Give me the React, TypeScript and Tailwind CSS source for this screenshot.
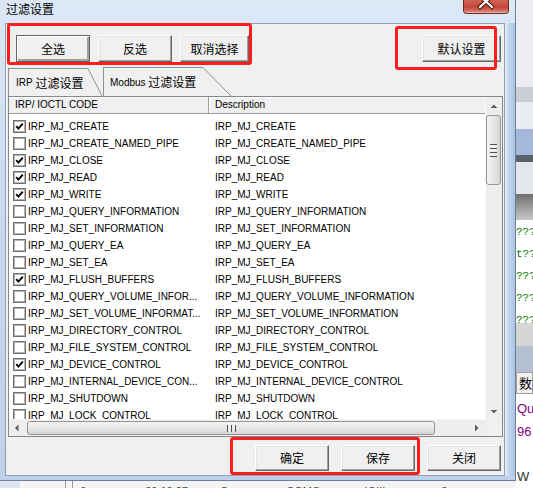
import React, { useState } from 'react';

type Row = { code: string; desc: string; on: boolean };

const ROWS: Row[] = [
  { code: 'IRP_MJ_CREATE', desc: 'IRP_MJ_CREATE', on: true },
  { code: 'IRP_MJ_CREATE_NAMED_PIPE', desc: 'IRP_MJ_CREATE_NAMED_PIPE', on: false },
  { code: 'IRP_MJ_CLOSE', desc: 'IRP_MJ_CLOSE', on: true },
  { code: 'IRP_MJ_READ', desc: 'IRP_MJ_READ', on: true },
  { code: 'IRP_MJ_WRITE', desc: 'IRP_MJ_WRITE', on: true },
  { code: 'IRP_MJ_QUERY_INFORMATION', desc: 'IRP_MJ_QUERY_INFORMATION', on: false },
  { code: 'IRP_MJ_SET_INFORMATION', desc: 'IRP_MJ_SET_INFORMATION', on: false },
  { code: 'IRP_MJ_QUERY_EA', desc: 'IRP_MJ_QUERY_EA', on: false },
  { code: 'IRP_MJ_SET_EA', desc: 'IRP_MJ_SET_EA', on: false },
  { code: 'IRP_MJ_FLUSH_BUFFERS', desc: 'IRP_MJ_FLUSH_BUFFERS', on: true },
  { code: 'IRP_MJ_QUERY_VOLUME_INFOR...', desc: 'IRP_MJ_QUERY_VOLUME_INFORMATION', on: false },
  { code: 'IRP_MJ_SET_VOLUME_INFORMAT...', desc: 'IRP_MJ_SET_VOLUME_INFORMATION', on: false },
  { code: 'IRP_MJ_DIRECTORY_CONTROL', desc: 'IRP_MJ_DIRECTORY_CONTROL', on: false },
  { code: 'IRP_MJ_FILE_SYSTEM_CONTROL', desc: 'IRP_MJ_FILE_SYSTEM_CONTROL', on: false },
  { code: 'IRP_MJ_DEVICE_CONTROL', desc: 'IRP_MJ_DEVICE_CONTROL', on: true },
  { code: 'IRP_MJ_INTERNAL_DEVICE_CON...', desc: 'IRP_MJ_INTERNAL_DEVICE_CONTROL', on: false },
  { code: 'IRP_MJ_SHUTDOWN', desc: 'IRP_MJ_SHUTDOWN', on: false },
  { code: 'IRP_MJ_LOCK_CONTROL', desc: 'IRP_MJ_LOCK_CONTROL', on: false },
];

const WinButton: React.FC<{ label: string; width: string; height: string; focused?: boolean; onClick?: () => void }> = ({
  label,
  width,
  height,
  focused,
  onClick,
}) => (
  <button
    onClick={onClick}
    className={`${width} ${height} shrink-0 bg-[#f0f0f0] flex items-center justify-center font-['Noto_Sans_CJK_SC',sans-serif] text-[12px] leading-none text-black ${
      focused
        ? 'border border-[#646464] shadow-[inset_1px_1px_0_#ffffff,inset_-2px_-2px_0_#a0a0a0]'
        : 'border border-t-[#ffffff] border-l-[#ffffff] border-r-[#696969] border-b-[#696969] shadow-[inset_-1px_-1px_0_#a0a0a0,inset_1px_1px_0_#e3e3e3]'
    }`}
  >
    {label}
  </button>
);

const CheckBox: React.FC<{ on: boolean; onToggle: () => void }> = ({ on, onToggle }) => (
  <span
    onClick={onToggle}
    className="w-[13px] h-[13px] shrink-0 bg-white border border-[#6f6f6f] shadow-[inset_0_0_0_1px_#b4b4b4] flex items-center justify-center"
  >
    {on && (
      <svg width="9" height="9" viewBox="0 0 9 9">
        <path d="M1.2 4.2 L3.4 6.6 L7.8 1.6" stroke="#000" strokeWidth="1.9" fill="none" />
      </svg>
    )}
  </span>
);

const Arrow: React.FC<{ dir: 'up' | 'down' | 'left' | 'right' }> = ({ dir }) => {
  const pts = {
    up: '5,10 12,10 8.5,6.5',
    down: '5,7 12,7 8.5,10.5',
    left: '9.5,4.5 9.5,11.5 6,8',
    right: '7,4.5 7,11.5 10.5,8',
  }[dir];
  return (
    <svg width="17" height="16" viewBox="0 0 17 16">
      <polygon points={pts} fill="#5a5a5a" />
    </svg>
  );
};

export default function App() {
  const [checked, setChecked] = useState<boolean[]>(ROWS.map((r) => r.on));
  const [tab, setTab] = useState(0);

  const toggle = (i: number) => setChecked((prev) => prev.map((v, idx) => (idx === i ? !v : v)));
  const setAll = (fn: (v: boolean, i: number) => boolean) => setChecked((prev) => prev.map(fn));

  return (
    <div className="relative w-[533px] h-[488px] overflow-hidden flex font-['Liberation_Sans','Noto_Sans_CJK_SC',sans-serif] text-black bg-white">
      {/* left: dialog + strip of the app behind it */}
      <div className="w-[516px] flex flex-col">
        <div className="w-[516px] h-[481px] flex flex-col border-r border-b border-[#6f7f94] bg-[linear-gradient(180deg,#dce8f6_0%,#c9daef_45%,#bdd1ea_100%)]">
          {/* Title bar */}
          <div className="h-[23px] flex justify-between items-start">
            <span className="pl-[6px] pt-[2px] font-['Noto_Sans_CJK_SC',sans-serif] text-[12px] leading-[14px] text-black">过滤设置</span>
            <div className="mr-[6px] w-[46px] h-[14px] rounded-b-[4px] border border-t-0 border-[#6e2a21] bg-[linear-gradient(180deg,#cf6456_0%,#c64535_55%,#dc9084_100%)] shadow-[inset_0_-1px_0_#eab0a6]">
              <svg width="44" height="13" viewBox="0 0 44 13">
                <path d="M16 -4 L28 7 M28 -4 L16 7" stroke="#4a1710" strokeWidth="4.2" strokeLinecap="square" />
                <path d="M16 -4 L28 7 M28 -4 L16 7" stroke="#ffffff" strokeWidth="2.2" strokeLinecap="square" />
              </svg>
            </div>
          </div>

          <div className="h-[453px] flex">
            <div className="w-[5px]" />
            {/* Client area */}
            <div className="w-[500px] h-[453px] bg-[#f0f0f0] border border-[#8fa1b8] flex flex-col">
              {/* top buttons */}
              <div className="flex items-start pl-[10px] pr-[3px] pt-[11px]">
                <WinButton label="全选" width="w-[74px]" height="h-[27px]" focused onClick={() => setAll(() => true)} />
                <div className="ml-[8px]">
                  <WinButton label="反选" width="w-[74px]" height="h-[27px]" onClick={() => setAll((v) => !v)} />
                </div>
                <div className="ml-[8px]">
                  <WinButton label="取消选择" width="w-[69px]" height="h-[27px]" onClick={() => setAll(() => false)} />
                </div>
                <div className="ml-auto">
                  <WinButton label="默认设置" width="w-[79px]" height="h-[27px]" onClick={() => setChecked(ROWS.map((r) => r.on))} />
                </div>
              </div>

              {/* tabs */}
              <div className="mt-[5px] h-[29px] ml-[2px] flex items-end">
                <div className="flex h-[28px]" onClick={() => setTab(0)}>
                  <div className="w-[80px] border-l border-t border-[#919191] pl-[7px] flex items-center whitespace-nowrap">
                    <span className="text-[10px]">IRP&nbsp;</span>
                    <span className="font-['Noto_Sans_CJK_SC',sans-serif] text-[12px]">过滤设置</span>
                  </div>
                  <svg width="14" height="28" viewBox="0 0 14 28">
                    <line x1="0" y1="0.5" x2="14" y2="28" stroke="#919191" />
                  </svg>
                </div>
                <div className="ml-[1px] flex h-[29px]" onClick={() => setTab(1)}>
                  <div className="w-[100px] border-l border-t border-[#919191] pl-[6px] flex items-center whitespace-nowrap">
                    <span className="text-[10px]">Modbus&nbsp;</span>
                    <span className="font-['Noto_Sans_CJK_SC',sans-serif] text-[12px]">过滤设置</span>
                  </div>
                  <svg width="28" height="29" viewBox="0 0 28 29">
                    <line x1="0" y1="0.5" x2="28" y2="29" stroke="#919191" />
                  </svg>
                </div>
              </div>

              {/* list control */}
              <div className="ml-[2px] w-[495px] h-[341px] border border-[#828790] bg-white flex flex-col">
                <div className="flex h-[322px]">
                  <div className="w-[476px] flex flex-col">
                    {/* header */}
                    <div className="h-[17px] flex bg-[#f0f0f0] border-b border-[#a0a0a0] text-[10px] leading-[16px]">
                      <div className="w-[200px] pl-[6px] border-r border-[#a0a0a0] shadow-[inset_0_1px_0_#ffffff]">IRP/ IOCTL CODE</div>
                      <div className="flex-1 pl-[5px] border-l border-white shadow-[inset_0_1px_0_#ffffff]">Description</div>
                    </div>
                    {/* rows */}
                    <div className="h-[305px] pt-[4px] overflow-hidden">
                      {ROWS.map((r, i) => (
                        <div key={r.code} className="h-[17px] flex items-center text-[10px] leading-[17px] whitespace-nowrap">
                          <div className="w-[201px] pl-[4px] flex items-center gap-[2px] overflow-hidden">
                            <CheckBox on={checked[i]} onToggle={() => toggle(i)} />
                            <span>{tab === 0 ? r.code : r.code}</span>
                          </div>
                          <div className="flex-1 pl-[5px] overflow-hidden">{r.desc}</div>
                        </div>
                      ))}
                    </div>
                  </div>
                  {/* vertical scrollbar */}
                  <div className="w-[17px] h-[322px] flex flex-col bg-[#eeeeee] border-l border-[#f7f7f7]">
                    <div className="h-[17px] flex items-center justify-center">
                      <Arrow dir="up" />
                    </div>
                    <div className="mt-[1px] w-[15px] h-[70px] rounded-[3px] border border-[#959595] bg-[linear-gradient(90deg,#f4f4f4_0%,#e6e6e6_55%,#d4d4d4_100%)] flex flex-col items-center justify-center gap-[1px]">
                      <div className="w-[7px] h-[1px] bg-[#555555]" />
                      <div className="w-[7px] h-[1px] bg-[#f8f8f8]" />
                      <div className="w-[7px] h-[1px] bg-[#555555]" />
                      <div className="w-[7px] h-[1px] bg-[#f8f8f8]" />
                      <div className="w-[7px] h-[1px] bg-[#555555]" />
                      <div className="w-[7px] h-[1px] bg-[#f8f8f8]" />
                      <div className="w-[7px] h-[1px] bg-[#555555]" />
                    </div>
                    <div className="flex-1" />
                    <div className="h-[17px] flex items-center justify-center">
                      <Arrow dir="down" />
                    </div>
                  </div>
                </div>
                {/* horizontal scrollbar */}
                <div className="h-[17px] flex">
                  <div className="w-[476px] h-[17px] flex items-center bg-[#eeeeee] border-t border-[#f7f7f7]">
                    <div className="w-[17px] flex items-center justify-center">
                      <Arrow dir="left" />
                    </div>
                    <div className="ml-[1px] w-[408px] h-[14px] rounded-[3px] border border-[#959595] bg-[linear-gradient(180deg,#f4f4f4_0%,#e6e6e6_55%,#d4d4d4_100%)] flex items-center justify-center gap-[1px]">
                      <div className="w-[1px] h-[7px] bg-[#555555]" />
                      <div className="w-[1px] h-[7px] bg-[#f8f8f8]" />
                      <div className="w-[1px] h-[7px] bg-[#555555]" />
                      <div className="w-[1px] h-[7px] bg-[#f8f8f8]" />
                      <div className="w-[1px] h-[7px] bg-[#555555]" />
                    </div>
                    <div className="flex-1" />
                    <div className="w-[17px] flex items-center justify-center">
                      <Arrow dir="right" />
                    </div>
                  </div>
                  <div className="w-[17px] h-[17px] bg-[#f0f0f0]" />
                </div>
              </div>

              {/* bottom buttons */}
              <div className="mt-[8px] flex justify-end gap-[12px] pr-[3px]">
                <WinButton label="确定" width="w-[74px]" height="h-[26px]" />
                <WinButton label="保存" width="w-[74px]" height="h-[26px]" />
                <WinButton label="关闭" width="w-[74px]" height="h-[26px]" />
              </div>
            </div>
            <div className="w-[10px] bg-[linear-gradient(90deg,#e6eef8_0%,#c3d6ee_40%,#aac3e4_100%)]" />
          </div>
          <div className="h-[4px]" />
        </div>

        {/* the app behind, bottom edge */}
        <div className="h-[7px] flex items-start bg-[#f4f4f4] text-[11px] leading-[14px] text-[#444444] overflow-hidden">
          <div className="w-[20px] h-[7px] bg-[#dbe5f0]" />
          <div className="w-[45px]" />
          <div className="w-[1px] h-[7px] bg-[#9a9a9a]" />
          <div className="w-[6px]" />
          <div className="w-[1px] h-[7px] bg-[#9a9a9a]" />
          <span className="ml-[7px] mt-[3px]">6</span>
          <span className="ml-[59px] mt-[3px]">20:10:27</span>
          <span className="ml-[32px] mt-[3px]">Comm</span>
          <span className="ml-[34px] mt-[3px]">COMO</span>
          <span className="ml-[44px] mt-[3px]">IOIII</span>
          <span className="ml-[56px] mt-[3px]">3</span>
        </div>
      </div>

      {/* right: the app behind the dialog */}
      <div className="w-[17px] h-[488px] flex flex-col overflow-hidden text-[11px] whitespace-nowrap">
        <div className="h-[90px] bg-[#eceef1]" />
        <div className="h-[15px] bg-[#c9ced6]" />
        <div className="h-[28px] bg-[#e9edf2]" />
        <div className="h-[27px] bg-[#a4b9d9]" />
        <div className="h-[7px] bg-[#59616c]" />
        <div className="h-[33px] bg-[#e3e7ec]" />
        <div className="h-[27px] bg-[linear-gradient(180deg,#6e6e6e,#c8c8c8)]" />
        <div className="h-[103px] bg-white text-[#008000] font-['Liberation_Mono',monospace] leading-[22px] pt-[1px]">
          <div>???</div>
          <div>t??</div>
          <div>???</div>
          <div>???</div>
          <div>???</div>
        </div>
        <div className="h-[23px] bg-[#d6d6d6]" />
        <div className="h-[27px] bg-[#b4bfd0]" />
        <div className="h-[22px] bg-[#f0f0f0] border border-[#a0a0a0] pl-[2px] font-['Noto_Sans_CJK_SC',sans-serif] text-[13px] leading-[20px]">数据</div>
        <div className="flex-1 bg-white text-[#800080] text-[13px] leading-[23px] pl-[1px] pt-[3px]">
          <div>Qu</div>
          <div>96</div>
          <div className="mt-[22px] text-[#333333]">W</div>
        </div>
      </div>

      {/* red annotation boxes */}
      <div className="absolute left-[7px] top-[23px] w-[245px] h-[42px] border-[3px] border-[#ff1c1c] rounded-[3px] pointer-events-none" />
      <div className="absolute left-[395px] top-[26px] w-[102px] h-[44px] border-[3px] border-[#ff1c1c] rounded-[3px] pointer-events-none" />
      <div className="absolute left-[230px] top-[437px] w-[190px] h-[38px] border-[3px] border-[#ff1c1c] rounded-[3px] pointer-events-none" />
    </div>
  );
}
